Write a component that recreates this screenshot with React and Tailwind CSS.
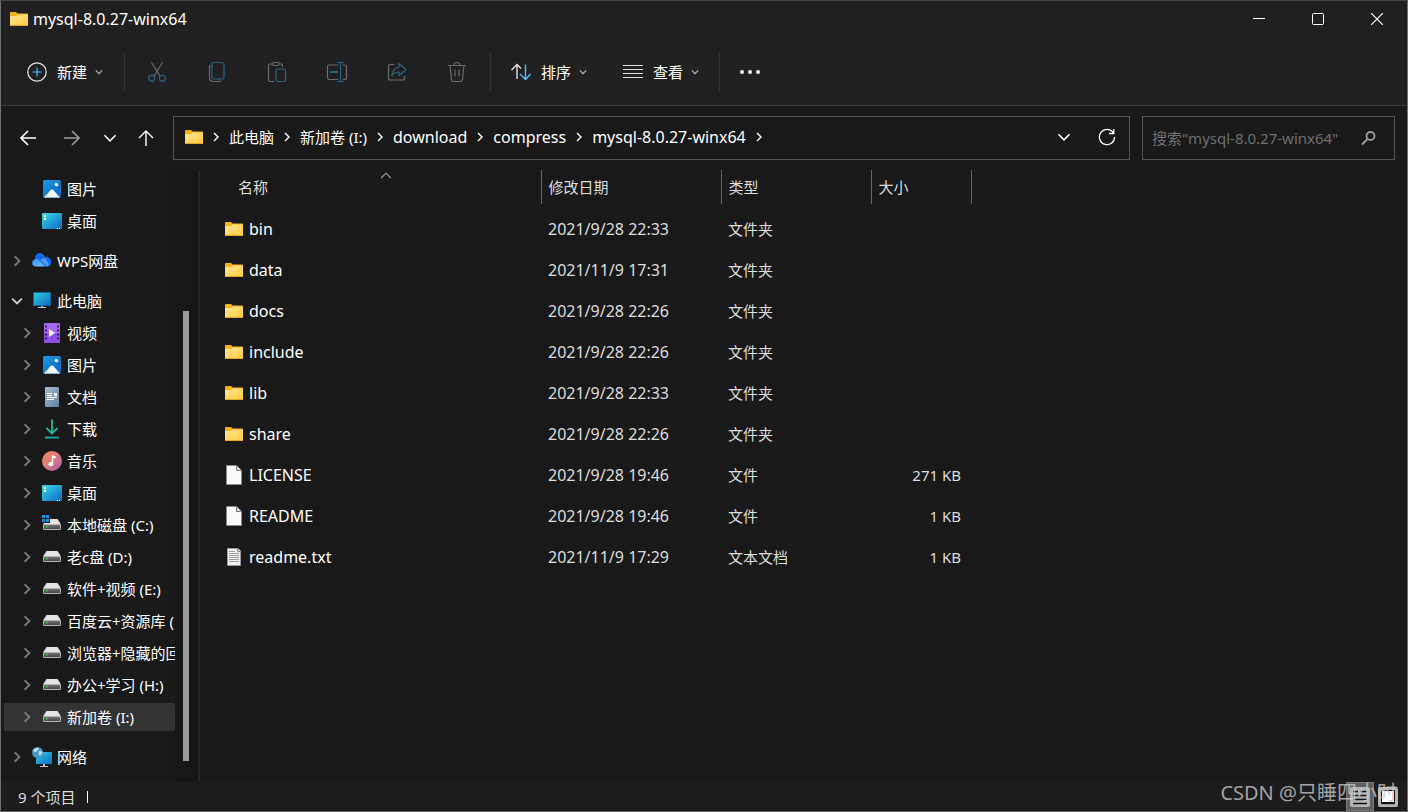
import { useId } from "react";
import clsx from "clsx";

function FolderIcon() {
  const id = useId();
  return (
    <svg width="18" height="14" viewBox="0 0 18 14" className="shrink-0">
      <defs>
        <linearGradient id={id} x1="0" y1="0" x2="1" y2="1">
          <stop offset="0" stopColor="#ffe69c" />
          <stop offset="1" stopColor="#ffca3a" />
        </linearGradient>
      </defs>
      <path d="M0 1q0-1 1-1h4.6q.6 0 1 .5L7.600 1.500H17q1 0 1 1V8H0z" fill="#f9b316" />
      <path d="M0 4h5.500q.7 0 1.200-.5l1-1H18V13q0 1-1 1H1q-1 0-1-1z" fill={`url(#${id})`} />
      <path d="M0 13h18q0 1-1 1H1q-1 0-1-1z" fill="#e5a52b" />
    </svg>
  );
}

function FileIcon() {
  return (
    <svg width="18" height="20" viewBox="0 0 18 20" className="shrink-0">
      <path d="M1.500.5h10l5 5v14h-15z" fill="#fafafa" stroke="#8a8a8a" />
      <path d="M11.500.5v5h5" fill="#e8e8e8" stroke="#6d6d6d" />
    </svg>
  );
}

function TextFileIcon() {
  return (
    <svg width="18" height="20" viewBox="0 0 18 20" className="shrink-0">
      <path d="M2.500 1.500h10.500l2.500 2.500v14.500h-13z" fill="#f2f2f2" stroke="#9a9a9a" />
      <path d="M12.500 1.500v3h3" fill="#ddd" stroke="#8a8a8a" />
      <path d="M4 4.500h6M4 6.500h10M4 8.500h10M4 10.500h10M4 12.500h10M4 14.500h10" stroke="#9c9c9c" />
    </svg>
  );
}

function PictureIcon() {
  const id = useId();
  return (
    <svg width="20" height="20" viewBox="0 0 20 20">
      <linearGradient id={id} x1="0" y1="0" x2="1" y2="1">
        <stop offset="0" stopColor="#1d9be6" />
        <stop offset="1" stopColor="#0a62ba" />
      </linearGradient>
      <rect x="1" y="1" width="18" height="18" rx="1.500" fill={`url(#${id})`} />
      <circle cx="14.500" cy="5.500" r="1.700" fill="#fff" />
      <path d="M2 18.500l6.600-7.200q1.400-1.400 2.800 0L18 18.500z" fill="#f4f9ff" />
    </svg>
  );
}

function DesktopIcon() {
  const id = useId();
  return (
    <svg width="20" height="20" viewBox="0 0 20 20">
      <linearGradient id={id} x1="0" y1="0" x2="1" y2="1">
        <stop offset="0" stopColor="#3ddbe6" />
        <stop offset="1" stopColor="#0a68c4" />
      </linearGradient>
      <rect x="0" y="2" width="20" height="16" rx="1" fill={`url(#${id})`} />
      <path d="M2 4h2v2H2zM2 7h2v2H2zM15 17h1v1h-1zM17 17h1v1h-1z" fill="#fff" />
    </svg>
  );
}

function CloudIcon() {
  const id = useId();
  return (
    <svg width="20" height="20" viewBox="0 0 20 20">
      <linearGradient id={id} x1="0" y1="0" x2="1" y2="1">
        <stop offset="0" stopColor="#2f8bff" />
        <stop offset="1" stopColor="#7cc0ff" />
      </linearGradient>
      <path d="M3 8.500a5 5 0 0 1 9.800-2.600A5.200 5.200 0 0 1 19.300 11a4.200 4.200 0 0 1-4.300 4.500L6 9z" fill="#1268e8" />
      <path d="M3.600 15.500a3.700 3.700 0 0 1-.5-7.300c2-.5 3.700.2 5 1.600l5.400 5.700z" fill={`url(#${id})`} />
      <path d="M8.500 9.500c1.500-2.500 4.200-2.800 6-1l2.400 5.500c-.6 1-1.500 1.500-2.900 1.500z" fill="#4b9bfa" />
      <path d="M7.600 8.800l6.700 6.700" stroke="#1563dd" strokeWidth=".8" />
    </svg>
  );
}

function ComputerIcon() {
  const id = useId();
  return (
    <svg width="20" height="20" viewBox="0 0 20 20">
      <linearGradient id={id} x1="0" y1="0" x2="1" y2="1">
        <stop offset="0" stopColor="#33cfdd" />
        <stop offset="1" stopColor="#0b6bc2" />
      </linearGradient>
      <rect x="1.500" y="1.500" width="17" height="13" fill={`url(#${id})`} stroke="#14659a" />
      <path d="M9 15h2v1H9z" fill="#8e9aa3" />
      <path d="M6 16h8v1H6z" fill="#c8d0d6" />
    </svg>
  );
}

function VideoIcon() {
  return (
    <svg width="20" height="20" viewBox="0 0 20 20">
      <rect x="2" y="0" width="16" height="20" rx="1" fill="#a76af0" />
      <path d="M2 10h16v9q0 1-1 1H3q-1 0-1-1z" fill="#8f4fe2" />
      <path
        d="M3 2.500h2v2H3zM3 6.500h2v2H3zM3 10.500h2v2H3zM3 14.500h2v2H3zM15 2.500h2v2h-2zM15 6.500h2v2h-2zM15 10.500h2v2h-2zM15 14.500h2v2h-2z"
        fill="#3a1a6e"
      />
      <path d="M7 6l6 4-6 4z" fill="#fff" />
    </svg>
  );
}

function DocumentIcon() {
  const id = useId();
  return (
    <svg width="20" height="20" viewBox="0 0 20 20">
      <linearGradient id={id} x1="0" y1="0" x2="1" y2="1">
        <stop offset="0" stopColor="#a9bdd2" />
        <stop offset="1" stopColor="#5f7f9f" />
      </linearGradient>
      <rect x="3" y="0" width="14" height="20" rx="1" fill={`url(#${id})`} />
      <path d="M5 6.500h5M5 8.500h5M5 10.500h10M5 12.500h7" stroke="#fff" />
      <rect x="12" y="6" width="3" height="3" fill="#fff" />
    </svg>
  );
}

function DownloadIcon() {
  const id = useId();
  return (
    <svg width="20" height="20" viewBox="0 0 20 20" fill="none">
      <linearGradient id={id} gradientUnits="userSpaceOnUse" x1="4" y1="0" x2="16" y2="20">
        <stop offset="0" stopColor="#34d07f" />
        <stop offset="1" stopColor="#12a5a8" />
      </linearGradient>
      <path d="M9.900 0.500L10.100 14M4.500 9l5.500 5.500L15.500 9M3 18.500l14 .1" stroke={`url(#${id})`} strokeWidth="1.800" />
    </svg>
  );
}

function MusicIcon() {
  const id = useId();
  return (
    <svg width="20" height="20" viewBox="0 0 20 20">
      <linearGradient id={id} x1="0" y1="0" x2="1" y2="1">
        <stop offset="0" stopColor="#f58a5c" />
        <stop offset=".5" stopColor="#dd7a7a" />
        <stop offset="1" stopColor="#9b5cb4" />
      </linearGradient>
      <circle cx="10" cy="10" r="10" fill={`url(#${id})`} />
      <ellipse cx="8.800" cy="13.200" rx="2.400" ry="2.100" fill="#fff" />
      <path d="M9.700 4l4 1.400v2.300l-2.500-.8v6.300H9.700z" fill="#fff" />
    </svg>
  );
}

function DriveIcon({ system }) {
  const id = useId();
  return (
    <svg width="20" height="20" viewBox="0 0 20 20">
      <linearGradient id={id} x1="0" y1="0" x2="0" y2="1">
        <stop offset="0" stopColor="#7a7a7a" />
        <stop offset="1" stopColor="#3f3f3f" />
      </linearGradient>
      <path d="M4.500 4h11L19 9.500H1z" fill="#e4e4e6" />
      <rect x="1.500" y="9.500" width="17" height="5" rx=".5" fill={`url(#${id})`} stroke="#b4b4b4" />
      <path d="M4 11h1.500v1.500H4z" fill="#38e04a" />
      {system && (
        <>
          <path d="M0 0h8v8H0z" fill="#191919" />
          <path d="M0 0h3v3H0zM4 0h3v3H4zM0 4h3v3H0zM4 4h3v3H4z" fill="#1b8fe0" />
        </>
      )}
    </svg>
  );
}

function NetworkIcon() {
  const id = useId();
  return (
    <svg width="20" height="20" viewBox="0 0 20 20">
      <linearGradient id={id} x1="0" y1="0" x2="1" y2="1">
        <stop offset="0" stopColor="#35c8dd" />
        <stop offset="1" stopColor="#0b6fc8" />
      </linearGradient>
      <rect x="4" y="5" width="16" height="12" fill={`url(#${id})`} />
      <path d="M11 17h2v2h-2zM8 19h8v1H8z" fill="#b9c4cc" />
      <circle cx="5.500" cy="5.500" r="5.500" fill="#4a93bf" />
      <path d="M1 3.500C2.500 1 5 .3 6.500 1c.8 1.500-1 2-2 3.500C3.500 6 2 5.500 1 3.500zM7 4c1.500-.5 3 0 3.500 1.500C10 8 8 9 7.300 8.500 6.500 7 6 5 7 4z" fill="#a8dcef" />
    </svg>
  );
}

function Chevron({ dir = "down", size = 8, weight = "1.400", className }) {
  const paths = {
    down: "M1 3l4 4 4-4",
    right: "M3 1l4 4-4 4",
    up: "M1 5l4-4 4 4",
  };
  return (
    <svg width={size} height={size} viewBox="0 0 10 10" fill="none" className={clsx("shrink-0", className)}>
      <path d={paths[dir]} stroke="currentColor" strokeWidth={weight} />
    </svg>
  );
}

function ToolIcon({ children }) {
  return (
    <svg width="22" height="22" viewBox="0 0 22 22" fill="none" stroke="#6b6b6b" strokeWidth="1.200">
      {children}
    </svg>
  );
}

const tools = [
  {
    label: "剪切",
    icon: (
      <ToolIcon>
        <path d="M5.500 1.500L14 15M16.500 1.500L8 15" />
        <circle cx="5.700" cy="17.300" r="3" stroke="#2b6482" />
        <circle cx="16.300" cy="17.300" r="3" stroke="#2b6482" />
      </ToolIcon>
    ),
  },
  {
    label: "复制",
    icon: (
      <ToolIcon>
        <path d="M4.500 4Q3.500 4.800 3.500 6v10.500q0 4 4 4H13q1.200 0 2-1" />
        <rect x="6" y="1.500" width="12" height="16.500" rx="2" stroke="#2b6482" />
      </ToolIcon>
    ),
  },
  {
    label: "粘贴",
    icon: (
      <ToolIcon>
        <path d="M8 20.500H4q-1.500 0-1.500-1.500V4.500Q2.500 3 4 3h2.500M13 3h2q1.500 0 1.500 1.500V6" />
        <rect x="6.500" y="1.500" width="6.500" height="3" rx="1.500" />
        <rect x="10" y="8" width="9.500" height="12.500" rx="1.500" stroke="#2b6482" />
      </ToolIcon>
    ),
  },
  {
    label: "重命名",
    icon: (
      <ToolIcon>
        <path d="M12 4H3Q1.500 4 1.500 5.500v10Q1.500 18.500 3 18.500h9M17 4h1.500q2 0 2 2v10q0 2.500-2 2.500H17" />
        <path d="M11.500 1.500h6M11.500 20.500h6M14.500 1.500v19" stroke="#2b6482" />
        <path d="M4 11h8" stroke="#2b6482" strokeWidth="2" />
      </ToolIcon>
    ),
  },
  {
    label: "共享",
    icon: (
      <ToolIcon>
        <path d="M8 3.500H4.500q-2 0-2 2V17q0 2 2 2h12q2 0 2-2v-2" />
        <path d="M13 2.500L20 8.500l-7 6V11C10 11 8 12 6 14.500 6 10 9 6.500 13 6z" stroke="#2b6482" strokeLinejoin="round" />
      </ToolIcon>
    ),
  },
  {
    label: "删除",
    icon: (
      <ToolIcon>
        <path d="M2 4.500h18M8 4.500q0-3 3-3t3 3M4 4.500l1.500 14q.2 2 2 2h7q1.800 0 2-2L18 4.500M9 8.500v7M13 8.500v7" />
      </ToolIcon>
    ),
  },
];

const navGroups = [
  [
    { name: "图片", icon: <PictureIcon />, child: true, leaf: true },
    { name: "桌面", icon: <DesktopIcon />, child: true, leaf: true },
  ],
  [{ name: "WPS网盘", icon: <CloudIcon /> }],
  [
    { name: "此电脑", icon: <ComputerIcon />, open: true },
    { name: "视频", icon: <VideoIcon />, child: true },
    { name: "图片", icon: <PictureIcon />, child: true },
    { name: "文档", icon: <DocumentIcon />, child: true },
    { name: "下载", icon: <DownloadIcon />, child: true },
    { name: "音乐", icon: <MusicIcon />, child: true },
    { name: "桌面", icon: <DesktopIcon />, child: true },
    { name: "本地磁盘 (C:)", icon: <DriveIcon system />, child: true },
    { name: "老c盘 (D:)", icon: <DriveIcon />, child: true },
    { name: "软件+视频 (E:)", icon: <DriveIcon />, child: true },
    { name: "百度云+资源库 (", icon: <DriveIcon />, child: true },
    { name: "浏览器+隐藏的回", icon: <DriveIcon />, child: true },
    { name: "办公+学习 (H:)", icon: <DriveIcon />, child: true },
    { name: "新加卷 (I:)", icon: <DriveIcon />, child: true, selected: true },
  ],
  [{ name: "网络", icon: <NetworkIcon /> }],
];

const files = [
  { name: "bin", date: "2021/9/28 22:33", type: "文件夹", kind: "folder" },
  { name: "data", date: "2021/11/9 17:31", type: "文件夹", kind: "folder" },
  { name: "docs", date: "2021/9/28 22:26", type: "文件夹", kind: "folder" },
  { name: "include", date: "2021/9/28 22:26", type: "文件夹", kind: "folder" },
  { name: "lib", date: "2021/9/28 22:33", type: "文件夹", kind: "folder" },
  { name: "share", date: "2021/9/28 22:26", type: "文件夹", kind: "folder" },
  { name: "LICENSE", date: "2021/9/28 19:46", type: "文件", size: "271 KB", kind: "file" },
  { name: "README", date: "2021/9/28 19:46", type: "文件", size: "1 KB", kind: "file" },
  { name: "readme.txt", date: "2021/11/9 17:29", type: "文本文档", size: "1 KB", kind: "text" },
];

const fileIcons = {
  folder: <FolderIcon />,
  file: <FileIcon />,
  text: <TextFileIcon />,
};

const crumbs = [
  { name: "此电脑" },
  { name: "新加卷 (I:)" },
  { name: "download", latin: true },
  { name: "compress", latin: true },
  { name: "mysql-8.0.27-winx64", latin: true },
];

function TitleBar() {
  return (
    <header className="flex h-9 items-center bg-[#202020] pr-px pl-[9px]">
      <FolderIcon />
      <h1 className="ml-[5px] flex-1 text-base leading-5">mysql-8.0.27-winx64</h1>
      <button aria-label="最小化" className="flex h-full w-[59px] items-center justify-center hover:bg-white/10">
        <svg width="12" height="12" viewBox="0 0 12 12" stroke="#fff">
          <path d="M0 5.500h12" />
        </svg>
      </button>
      <button aria-label="最大化" className="flex h-full w-[59px] items-center justify-center hover:bg-white/10">
        <svg width="12" height="12" viewBox="0 0 12 12" fill="none" stroke="#fff">
          <rect x=".5" y=".5" width="11" height="11" rx="1" />
        </svg>
      </button>
      <button aria-label="关闭" className="flex h-full w-[59px] items-center justify-center hover:bg-red-600">
        <svg width="12" height="12" viewBox="0 0 12 12" stroke="#fff" strokeWidth="1.200">
          <path d="M0 0l12 12M12 0L0 12" />
        </svg>
      </button>
    </header>
  );
}

function MenuButton({ icon, label }) {
  return (
    <button className="flex h-10 items-center gap-2.5 rounded px-2.5 hover:bg-white/10">
      {icon}
      <span className="flex items-center gap-2">
        {label}
        <Chevron className="text-[#b8b8b8]" />
      </span>
    </button>
  );
}

function Divider() {
  return <div className="h-10 w-px bg-[#333333]" />;
}

function Toolbar() {
  return (
    <div className="flex h-[69px] items-center border-b border-[#393939] bg-[#202020] pt-0.5 pl-4 text-[15px]">
      <MenuButton
        label="新建"
        icon={
          <svg width="20" height="20" viewBox="0 0 20 20" fill="none" strokeWidth="1.200">
            <circle cx="10" cy="10" r="9.200" stroke="#e6e6e6" />
            <path d="M10 5.500v9M5.500 10h9" stroke="#4cc2ff" />
          </svg>
        }
      />
      <div className="flex items-center gap-3 pl-[11px]">
        <Divider />
        <div className="flex gap-5 pr-px">
          {tools.map((tool) => (
            <button key={tool.label} aria-label={tool.label} disabled className="flex size-10 items-center justify-center">
              {tool.icon}
            </button>
          ))}
        </div>
        <Divider />
      </div>
      <div className="flex gap-4 px-2.5">
        <MenuButton
          label="排序"
          icon={
            <svg width="20" height="20" viewBox="0 0 20 20" fill="none" strokeWidth="1.400">
              <path d="M6 17V2.500M.5 8L6 2.500 10 6.500" stroke="#e6e6e6" />
              <path d="M14.500 2.500V17M9 12l5.500 5.500L19.500 12" stroke="#4cc2ff" />
            </svg>
          }
        />
        <MenuButton
          label="查看"
          icon={
            <svg width="20" height="20" viewBox="0 0 20 20" stroke="#dcdcdc">
              <path d="M0 3.500h20M0 7.500h20M0 11.500h20M0 15.500h20" />
            </svg>
          }
        />
      </div>
      <Divider />
      <button aria-label="查看更多" className="ml-2.5 flex size-10 items-center justify-center rounded hover:bg-white/10">
        <svg width="22" height="6" viewBox="0 0 22 6" fill="#fff">
          <circle cx="3" cy="3" r="2" />
          <circle cx="11" cy="3" r="2" />
          <circle cx="19" cy="3" r="2" />
        </svg>
      </button>
    </div>
  );
}

function AddressBar() {
  return (
    <div className="flex h-16 items-center pr-3 pl-[7px]">
      <nav className="flex items-center gap-1 pr-[9px]" aria-label="导航">
        <button aria-label="后退" className="flex size-10 items-center justify-center">
          <svg width="16" height="16" viewBox="0 0 16 16" fill="none" stroke="#fff" strokeWidth="1.600">
            <path d="M16 8H1M8 1L1 8l7 7" />
          </svg>
        </button>
        <button aria-label="前进" className="flex size-10 items-center justify-center">
          <svg width="16" height="16" viewBox="0 0 16 16" fill="none" stroke="#9a9a9a" strokeWidth="1.600">
            <path d="M0 8h15M8 1l7 7-7 7" />
          </svg>
        </button>
        <button aria-label="最近位置" className="flex h-10 w-7 items-center justify-center">
          <Chevron size={14} weight="1.100" />
        </button>
        <button aria-label="向上" className="flex h-10 w-9 items-center justify-center">
          <svg width="16" height="16" viewBox="0 0 16 16" fill="none" stroke="#fff" strokeWidth="1.400">
            <path d="M8 16V1M1 8l7-7 7 7" />
          </svg>
        </button>
      </nav>

      <div className="flex h-11 min-w-0 flex-1 items-center border border-[#535353] pb-0.5 pl-[11px]">
        <FolderIcon />
        <ol className="flex flex-1 items-center text-[15px]">
          <li className="flex w-[26px] justify-center">
            <Chevron dir="right" size={10} />
          </li>
          {crumbs.map((crumb) => (
            <li key={crumb.name} className="flex items-center">
              <a href="#" className={clsx("whitespace-nowrap", crumb.latin && "text-base leading-5")}>
                {crumb.name}
              </a>
              <span className="flex w-[26px] justify-center">
                <Chevron dir="right" size={10} />
              </span>
            </li>
          ))}
        </ol>
        <button aria-label="历史记录" className="flex h-full w-[43px] items-center justify-center">
          <Chevron size={14} weight="1.100" />
        </button>
        <button aria-label="刷新" className="flex h-full w-11 items-center justify-center">
          <svg width="18" height="18" viewBox="0 0 18 18" fill="none" stroke="#fff" strokeWidth="1.300">
            <path d="M16.600 9a7.600 7.600 0 1 1-2.600-5.700l1.500 1.500M15.800 1v4.500H11" />
          </svg>
        </button>
      </div>

      <label className="ml-3 flex h-11 w-[253px] items-center border border-[#535353] pr-[17px] pl-[9px]">
        <input
          type="search"
          aria-label="搜索"
          placeholder={'搜索"mysql-8.0.27-winx64"'}
          className="min-w-0 flex-1 bg-transparent text-[15px] outline-none placeholder:text-[#6f6f6f]"
        />
        <svg width="18" height="18" viewBox="0 0 18 18" fill="none" stroke="#9d9d9d">
          <circle cx="11.500" cy="7" r="4" strokeWidth="1.800" />
          <path d="M8.500 10L3 15.500" strokeWidth="2" />
        </svg>
      </label>
    </div>
  );
}

function NavItem({ item }) {
  return (
    <li>
      <a
        href="#"
        className={clsx(
          "flex h-7 items-center gap-[5px] overflow-hidden rounded-xs text-[15px] whitespace-nowrap",
          item.child ? "pl-4" : "pl-1.5",
          item.selected ? "bg-[#333333]" : "hover:bg-[#2a2a2a]"
        )}
      >
        <span className="flex w-[17px] shrink-0 justify-center">
          {!item.leaf && (
            <Chevron
              dir={item.open ? "down" : "right"}
              size={12}
              weight="1.600"
              className={clsx("-ml-1", item.open ? "text-[#cfcfcf]" : "text-[#767676]")}
            />
          )}
        </span>
        <span className="shrink-0">{item.icon}</span>
        {item.name}
      </a>
    </li>
  );
}

function Sidebar() {
  return (
    <aside className="flex w-[199px] shrink-0 border-r-2 border-[#262626]">
      <div className="flex min-w-0 flex-1 flex-col gap-3 pt-[5px] pb-2.5 pl-[3px]">
        {navGroups.map((group, i) => (
          <ul key={i} className="flex flex-col gap-1">
            {group.map((item) => (
              <NavItem key={item.name} item={item} />
            ))}
          </ul>
        ))}
      </div>
      <div className="flex w-[23px] flex-col bg-[#171717] pt-[141px] pb-[21px] pl-2">
        <div className="w-1.5 flex-1 bg-[#9a9a9a]" />
      </div>
    </aside>
  );
}

function FileTable() {
  return (
    <main className="min-w-0 flex-1">
      <table className="w-[771px] table-fixed text-left text-[15px]">
        <thead>
          <tr className="h-[34px] text-[#dedede]">
            <th className="relative w-[341px] border-r border-[#636363] pl-[38px] font-normal">
              名称
              <Chevron dir="up" size={12} weight="0.900" className="absolute top-0.5 left-[180px] text-[#a0a0a0]" />
            </th>
            <th className="w-[180px] border-r border-[#636363] pl-[7px] font-normal">修改日期</th>
            <th className="w-[150px] border-r border-[#636363] pl-[7px] font-normal">类型</th>
            <th className="w-[100px] border-r border-[#636363] pl-[7px] font-normal">大小</th>
          </tr>
        </thead>
        <tbody className="before:block before:h-1">
          {files.map((file) => (
            <tr key={file.name} className="h-[41px] text-[#dedede] hover:bg-white/5">
              <td className="pl-[25px]">
                <a href="#" className="flex items-center gap-1.5 text-base leading-5 text-white">
                  {fileIcons[file.kind]}
                  {file.name}
                </a>
              </td>
              <td className="pl-[7px] text-base leading-5">{file.date}</td>
              <td className="pl-[7px]">{file.type}</td>
              <td className="pr-2.5 text-right">{file.size}</td>
            </tr>
          ))}
        </tbody>
      </table>
    </main>
  );
}

function StatusBar() {
  return (
    <footer className="relative flex h-[29px] items-center bg-[#1c1c1c] pr-[5px] pl-[17px] text-[#dedede]">
      <span className="flex flex-1 items-center gap-3 text-[15px]">
        9 个项目
        <span className="h-3 w-px bg-white" />
      </span>
      <button aria-label="详细信息" className="flex h-[29px] w-7 items-center justify-center border border-[#7a7a7a] bg-[#606060]">
        <svg width="20" height="20" viewBox="0 0 20 20">
          <rect width="20" height="20" rx="2" fill="#b4b4b4" />
          <path d="M3 4.500h5M10 4.500h7M3 8.500h14M3 12.500h14M3 16.500h14" stroke="#111" strokeWidth="1.400" />
        </svg>
      </button>
      <button aria-label="大图标" className="flex h-[29px] w-7 items-center justify-center">
        <svg width="20" height="20" viewBox="0 0 20 20">
          <rect width="20" height="20" rx="2" fill="#b4b4b4" />
          <rect x="3.500" y="3.500" width="13" height="12" fill="#fff" stroke="#111" />
          <path d="M3 16.500h14" stroke="#111" strokeWidth="1.400" />
        </svg>
      </button>
      <span className="pointer-events-none absolute right-2.5 bottom-1 text-xl leading-7 whitespace-nowrap text-[#c8c8c8]/80">
        CSDN @只睡四小时
      </span>
    </footer>
  );
}

export default function App() {
  return (
    <div className="flex min-h-screen flex-col border border-x-[#707070] border-t-[#474747] border-b-[#606060] bg-[#191919] font-['Noto_Sans','Noto_Sans_CJK_SC',sans-serif] leading-5 text-white">
      <TitleBar />
      <Toolbar />
      <AddressBar />
      <div className="flex flex-1">
        <Sidebar />
        <FileTable />
      </div>
      <StatusBar />
    </div>
  );
}
